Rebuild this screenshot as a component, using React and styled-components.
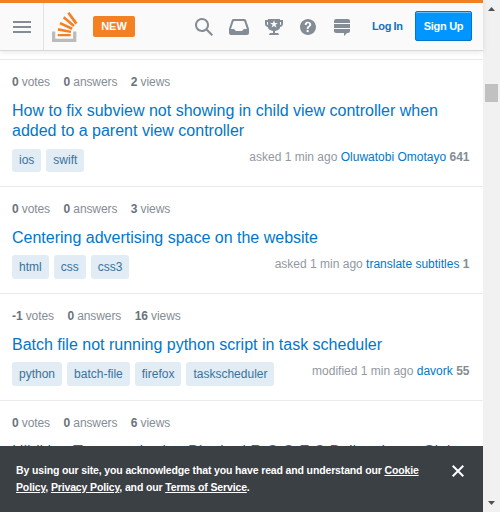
import React from "react";
import styled, { createGlobalStyle } from "styled-components";

const Global = createGlobalStyle`
  *, *::before, *::after { box-sizing: border-box; }
  body { margin: 0; background: #fff; overflow: hidden; font: 12px/16px "Liberation Sans", Arial, sans-serif; }
  a { color: #0077cc; text-decoration: none; }
  svg { display: block; flex: none; }
`;

const Window = styled.div`
  display: grid;
  grid-template-columns: 483px 17px;
  width: 500px;
  height: 512px;
`;

const Site = styled.div`
  display: flex;
  flex-direction: column;
  height: 512px;
  min-width: 0;
`;

const TopBar = styled.header`
  z-index: 1;
  display: flex;
  align-items: center;
  flex: none;
  height: 51px;
  border-top: 3px solid #f48024;
  border-bottom: 1px solid #d6d8db;
  background: #fafafb;
  box-shadow: 0 1px 6px rgba(12, 13, 14, 0.1);
`;

const MenuButton = styled.div`
  display: flex;
  flex-direction: column;
  justify-content: center;
  gap: 3px;
  width: 44px;
  height: 47px;
  padding-left: 13px;
  border-right: 1px solid #e0e2e4;
`;

const MenuLine = styled.span`
  width: 18px;
  height: 2px;
  background: #848d95;
`;

const Logo = styled.svg`
  margin-left: 8px;
`;

const NewBadge = styled.span`
  width: 42px;
  height: 21px;
  margin: -1px 60px 0 15px;
  border-radius: 2px;
  background: #f48024;
  color: #fff;
  font-size: 11px;
  font-weight: bold;
  line-height: 21px;
  text-align: center;
`;

const IconGroup = styled.nav`
  display: flex;
  gap: 16px;
  color: #848d95;
`;

const LogIn = styled.a`
  width: 31px;
  margin: -1px 12px 0 21px;
  color: #0f74be;
  font-size: 11px;
  font-weight: bold;
  letter-spacing: -0.4px;
  white-space: nowrap;
`;

const SignUp = styled.a`
  width: 57px;
  height: 30px;
  margin-top: -1px;
  border: 1px solid #0077cc;
  border-radius: 2px;
  background: #0095ff;
  box-shadow: inset 0 1px 0 #66bfff;
  color: #fff;
  font-size: 11px;
  font-weight: bold;
  letter-spacing: -0.3px;
  line-height: 29px;
  text-align: center;
`;

const Feed = styled.main`
  flex: 1;
  min-height: 0;
  padding-top: 8px;
  overflow: hidden;
`;

const Question = styled.article`
  padding: 14px 12px 14px;
  border-top: 1px solid #e9eaeb;
`;

const Stats = styled.div`
  display: flex;
  gap: 13.5px;
  height: 16px;
  color: #848d95;
  letter-spacing: -0.1px;
  b { color: #6a737c; }
`;

const Title = styled.h3`
  margin: 11px 0 7px;
  font-size: 16px;
  font-weight: normal;
  line-height: 20px;
  white-space: nowrap;
`;

const Footer = styled.div`
  display: flex;
  align-items: flex-end;
  justify-content: space-between;
  height: 24px;
`;

const Tags = styled.div`
  display: flex;
  gap: 5px;
`;

const Tag = styled.a`
  height: ${(p) => (p.$compact ? 23 : 24)}px;
  padding: 0 7px;
  border-radius: 3px;
  background: #e1ecf4;
  && { color: #39739d; }
  line-height: ${(p) => (p.$compact ? 22 : 24)}px;
`;

const Activity = styled.div`
  margin: 0 1.5px 7px 0;
  color: #9199a1;
  white-space: nowrap;
  b { color: #848d95; }
`;

const Notice = styled.footer`
  z-index: 1;
  display: flex;
  justify-content: space-between;
  flex: none;
  height: 66px;
  padding: 16px 19px 0 16px;
  background: #3b4045;
  color: #fff;
  font-size: 10.5px;
  font-weight: bold;
  letter-spacing: -0.14px;
  line-height: 17px;
  white-space: nowrap;
  a { color: #fff; text-decoration: underline; }
`;

const Scrollbar = styled.aside`
  display: flex;
  flex-direction: column;
  align-items: center;
  background: #f1f1f1;
`;

const Thumb = styled.div`
  width: 13px;
  height: 18px;
  margin: 73px 0 auto;
  background: #c1c1c1;
`;

const icons = [
  [18, "M18 16.5l-5.14-5.18h-.35a7 7 0 1 0-1.19 1.19v.35L16.5 18l1.5-1.5zM12 7A5 5 0 1 1 2 7a5 5 0 0 1 10 0z"],
  [20, "M15.19 1H4.63c-.85 0-1.6.54-1.85 1.35L0 10.79V15c0 1.1.9 2 2 2h16a2 2 0 0 0 2-2v-4.21l-2.87-8.44A2 2 0 0 0 15.19 1zm-.28 10l-2 2h-6l-2-2H1.96L4.4 3.68A1 1 0 0 1 5.35 3h9.12a1 1 0 0 1 .95.68L17.86 11h-2.95z"],
  [18, "M15 2V1H3v1H0v4c0 1.6 1.4 3 3 3v1c.4 1.5 3 2.6 5 3v2H5s-1 1.5-1 2h10c0-.4-1-2-1-2h-3v-2c2-.4 4.6-1.5 5-3V9c1.6-.2 3-1.4 3-3V2h-3zM3 7c-.5 0-1-.5-1-1V4h1v3zm8.4 2.5L9 8 6.6 9.4l1-2.7L5 5h3l1-2.7L10 5h2.8l-2.3 1.8 1 2.7h-.1zM16 6c0 .5-.5 1-1 1V4h1v2z"],
  [18, "M9 1C4.64 1 1 4.64 1 9c0 4.36 3.64 8 8 8 4.36 0 8-3.64 8-8 0-4.36-3.64-8-8-8zm.81 12.13c-.02.71-.55 1.15-1.24 1.13-.66-.02-1.17-.49-1.15-1.2.02-.72.56-1.18 1.22-1.16.7.03 1.2.51 1.17 1.23zM11.77 8a5.8 5.8 0 0 1-1.02.91l-.53.37c-.26.2-.42.43-.5.69a4 4 0 0 0-.09.75c0 .05-.03.16-.18.16H7.88c-.16 0-.18-.1-.18-.15.03-.66.12-1.21.4-1.66.4-.49.88-.9 1.43-1.22.16-.12.28-.25.38-.39a1.34 1.34 0 0 0 .02-1.71c-.24-.31-.51-.46-1.03-.46-.51 0-.8.26-1.02.6-.21.33-.18.73-.18 1.1H5.75c0-1.38.35-2.25 1.1-2.76.52-.35 1.17-.5 1.93-.5 1 0 1.79.18 2.49.71.64.5.98 1.18.98 2.12 0 .57-.2 1.05-.48 1.44z"],
  [18, "M15 1H3a2 2 0 0 0-2 2v2h16V3a2 2 0 0 0-2-2zM1 13c0 1.1.9 2 2 2h8v3l3-3h1a2 2 0 0 0 2-2v-2H1v2zM17 6H1v4h16V6z"],
];

const questions = [
  { votes: "0", answers: "0", views: "2", title: ["How to fix subview not showing in child view controller when", "added to a parent view controller"], tags: ["ios", "swift"], action: "asked", user: "Oluwatobi Omotayo", rep: "641" },
  { votes: "0", answers: "0", views: "3", title: ["Centering advertising space on the website"], tags: ["html", "css", "css3"], action: "asked", user: "translate subtitles", rep: "1" },
  { votes: "-1", answers: "0", views: "16", title: ["Batch file not running python script in task scheduler"], tags: ["python", "batch-file", "firefox", "taskscheduler"], action: "modified", user: "davork", rep: "55" },
  { votes: "0", answers: "0", views: "6", title: ["Hibikitto Transact Ludge Blanked R C O F C Ballew Iawnt Sitti"], tags: [] },
];

const QuestionItem = ({ q }) => (
  <Question>
    <Stats>
      <span><b>{q.votes}</b> votes</span>
      <span><b>{q.answers}</b> answers</span>
      <span><b>{q.views}</b> views</span>
    </Stats>
    <Title>
      <a>{q.title.map((line, i) => <React.Fragment key={line}>{i > 0 && <br />}{line}</React.Fragment>)}</a>
    </Title>
    {q.user && (
      <Footer>
        <Tags>{q.tags.map((t) => <Tag key={t} $compact={q.title.length > 1}>{t}</Tag>)}</Tags>
        <Activity>{q.action} 1 min ago <a>{q.user}</a> <b>{q.rep}</b></Activity>
      </Footer>
    )}
  </Question>
);

export default function App() {
  return (
    <>
      <Global />
      <Window>
        <Site>
          <TopBar>
            <MenuButton><MenuLine /><MenuLine /><MenuLine /></MenuButton>
            <Logo width="26" height="30" viewBox="0 0 32 37">
              <path fill="#bcbbbb" d="M26 33v-9h4v13H0V24h4v9h22z" />
              <path fill="#f48024" d="M21.5 0l-2.7 2 9.9 13.3 2.7-2L21.5 0zM26 18.4L13.3 7.8l2.1-2.5 12.7 10.6-2.1 2.5zM9.1 15.2l15 7 1.4-3-15-7-1.4 3zm14 10.79l.68-2.95-16.1-3.35L7 23l16.1 2.99zM23 30H7v-3h16v3z" />
            </Logo>
            <NewBadge>NEW</NewBadge>
            <IconGroup>
              {icons.map(([w, d]) => (
                <svg key={d} width={w} height="18" viewBox={`0 0 ${w} 18`} fill="currentColor"><path d={d} /></svg>
              ))}
            </IconGroup>
            <LogIn>Log In</LogIn>
            <SignUp>Sign Up</SignUp>
          </TopBar>
          <Feed>{questions.map((q) => <QuestionItem key={q.title[0]} q={q} />)}</Feed>
          <Notice>
            <div>
              By using our site, you acknowledge that you have read and understand our <a>Cookie</a><br />
              <a>Policy</a>, <a>Privacy Policy</a>, and our <a>Terms of Service</a>.
            </div>
            <svg width="12" height="20" viewBox="0 0 12 20" stroke="#fff" strokeWidth="2"><path d="M.7 3.7l10.6 10.6M11.3 3.7L.7 14.3" /></svg>
          </Notice>
        </Site>
        <Scrollbar>
          <svg width="17" height="11" viewBox="0 0 17 11"><path fill="#505050" d="M5 11l3.5-4L12 11z" /></svg>
          <Thumb />
          <svg width="17" height="12" viewBox="0 0 17 12"><path fill="#505050" d="M5 1h7L8.5 5z" /></svg>
        </Scrollbar>
      </Window>
    </>
  );
}
